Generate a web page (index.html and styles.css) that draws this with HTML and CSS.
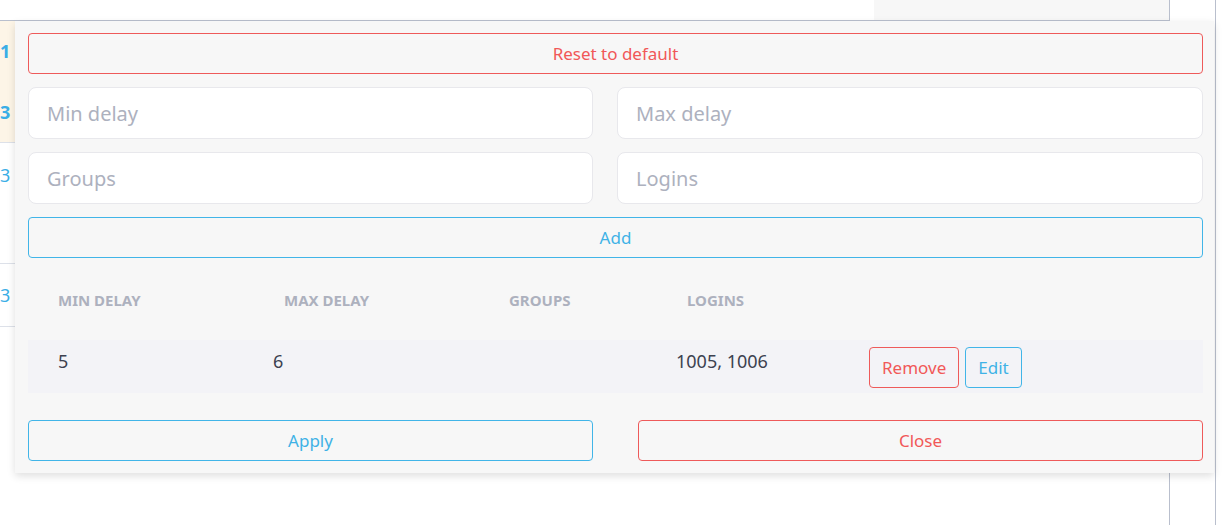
FILE: index.html
```html
<!DOCTYPE html>
<html>
<head>
    <link rel="stylesheet" href="styles.css">
    <title>Delay rules</title>
</head>
<body>
    <div class="page">
        <div class="topbar">
            <div class="topbar-cell"></div>
        </div>
        <div class="rows">
            <div class="row row-active">
                <div class="num">1</div>
                <div class="num">3</div>
            </div>
            <div class="row row-tall"><div class="num">3</div></div>
            <div class="row row-short"><div class="num">3</div></div>
        </div>
        <div class="edge"></div>

        <div class="popup">
            <button class="btn btn-red btn-wide">Reset to default</button>
            <div class="fields">
                <input type="text" class="field" placeholder="Min delay">
                <input type="text" class="field" placeholder="Max delay">
                <input type="text" class="field" placeholder="Groups">
                <input type="text" class="field" placeholder="Logins">
            </div>
            <button class="btn btn-blue btn-wide">Add</button>

            <div class="rules">
                <div class="rules-head">
                    <div class="th">Min delay</div>
                    <div class="th th-pad">Max delay</div>
                    <div class="th th-pad">Groups</div>
                    <div class="th th-pad">Logins</div>
                    <div></div>
                </div>
                <div class="rules-row">
                    <div class="td">5</div>
                    <div class="td">6</div>
                    <div class="td"></div>
                    <div class="td">1005, 1006</div>
                    <div class="actions">
                        <button class="btn btn-red btn-small">Remove</button>
                        <button class="btn btn-blue btn-small">Edit</button>
                    </div>
                </div>
            </div>

            <div class="footer">
                <button class="btn btn-blue">Apply</button>
                <button class="btn btn-red">Close</button>
            </div>
        </div>
    </div>
</body>
</html>
```

FILE: styles.css
```css
body {
    font-family: "Noto Sans", "Open Sans", Arial, sans-serif;
    margin: 0;
    padding: 0;
    background: #fff;
}

.page {
    position: relative;
    width: 1231px;
    height: 525px;
    overflow: hidden;
}

.topbar {
    width: 1169px;
    height: 20px;
    border-bottom: 1px solid #b9bfcd;
    display: flex;
    justify-content: flex-end;
}

.topbar-cell {
    width: 295px;
    background: #f7f7f7;
}

.rows {
    width: 1169px;
}

.row {
    border-bottom: 1px solid #dde1e9;
    color: #3aaee6;
    font-size: 18px;
}

.row-active {
    background: #fdf5e7;
    height: 121px;
    font-weight: bold;
    display: flex;
    flex-direction: column;
    justify-content: space-around;
}

.row-tall {
    height: 121px;
    padding-top: 20px;
    box-sizing: border-box;
}

.row-short {
    height: 63px;
    padding-top: 19px;
    box-sizing: border-box;
}

.num {
    line-height: 24px;
}

.edge {
    position: absolute;
    top: 0;
    left: 1169px;
    width: 45px;
    height: 525px;
    border-left: 1px solid #b9bfcd;
    border-right: 1px solid #b9bfcd;
}

.popup {
    position: absolute;
    top: 21px;
    left: 15px;
    width: 1199px;
    box-sizing: border-box;
    padding: 12px 11px 12px 13px;
    background: #f7f7f7;
    box-shadow: 0 3px 8px rgba(0, 0, 0, 0.13);
}

.btn {
    font-family: inherit;
    font-size: 17px;
    height: 41px;
    background: transparent;
    border-radius: 4px;
    padding: 0 12px;
    cursor: pointer;
}

.btn-wide {
    width: 100%;
    display: block;
}

.btn-red {
    border: 1px solid #ee5a5a;
    color: #f15858;
}

.btn-blue {
    border: 1px solid #41b5e8;
    color: #3fb2e6;
}

.fields {
    display: grid;
    grid-template-columns: 565px 1fr;
    column-gap: 24px;
    row-gap: 13px;
    margin: 13px 0;
}

.field {
    height: 52px;
    box-sizing: border-box;
    border: 1px solid #e8e8ec;
    border-radius: 8px;
    background: #fff;
    padding: 0 18px;
    font-family: inherit;
    font-size: 20px;
    color: #3c4150;
}

.field::placeholder {
    color: #adb1be;
}

.rules {
    margin-top: 14px;
}

.rules-head,
.rules-row {
    display: grid;
    grid-template-columns: 215px 225px 178px 193px 1fr;
    padding-left: 30px;
}

.rules-head {
    padding-top: 20px;
    height: 68px;
    box-sizing: border-box;
}

.th {
    font-size: 15px;
    font-weight: bold;
    text-transform: uppercase;
    color: #adb1be;
    line-height: 16px;
}

.th-pad {
    padding-left: 11px;
}

.rules-row {
    background: #f3f3f7;
    height: 53px;
    align-items: start;
}

.td {
    font-size: 18px;
    color: #3c4150;
    padding-top: 8px;
    line-height: 26px;
}

.actions {
    display: flex;
    gap: 6px;
    padding-top: 7px;
}

.btn-small {
    padding: 0 12px;
}

.footer {
    display: grid;
    grid-template-columns: 565px 1fr;
    column-gap: 45px;
    margin-top: 27px;
}
```
